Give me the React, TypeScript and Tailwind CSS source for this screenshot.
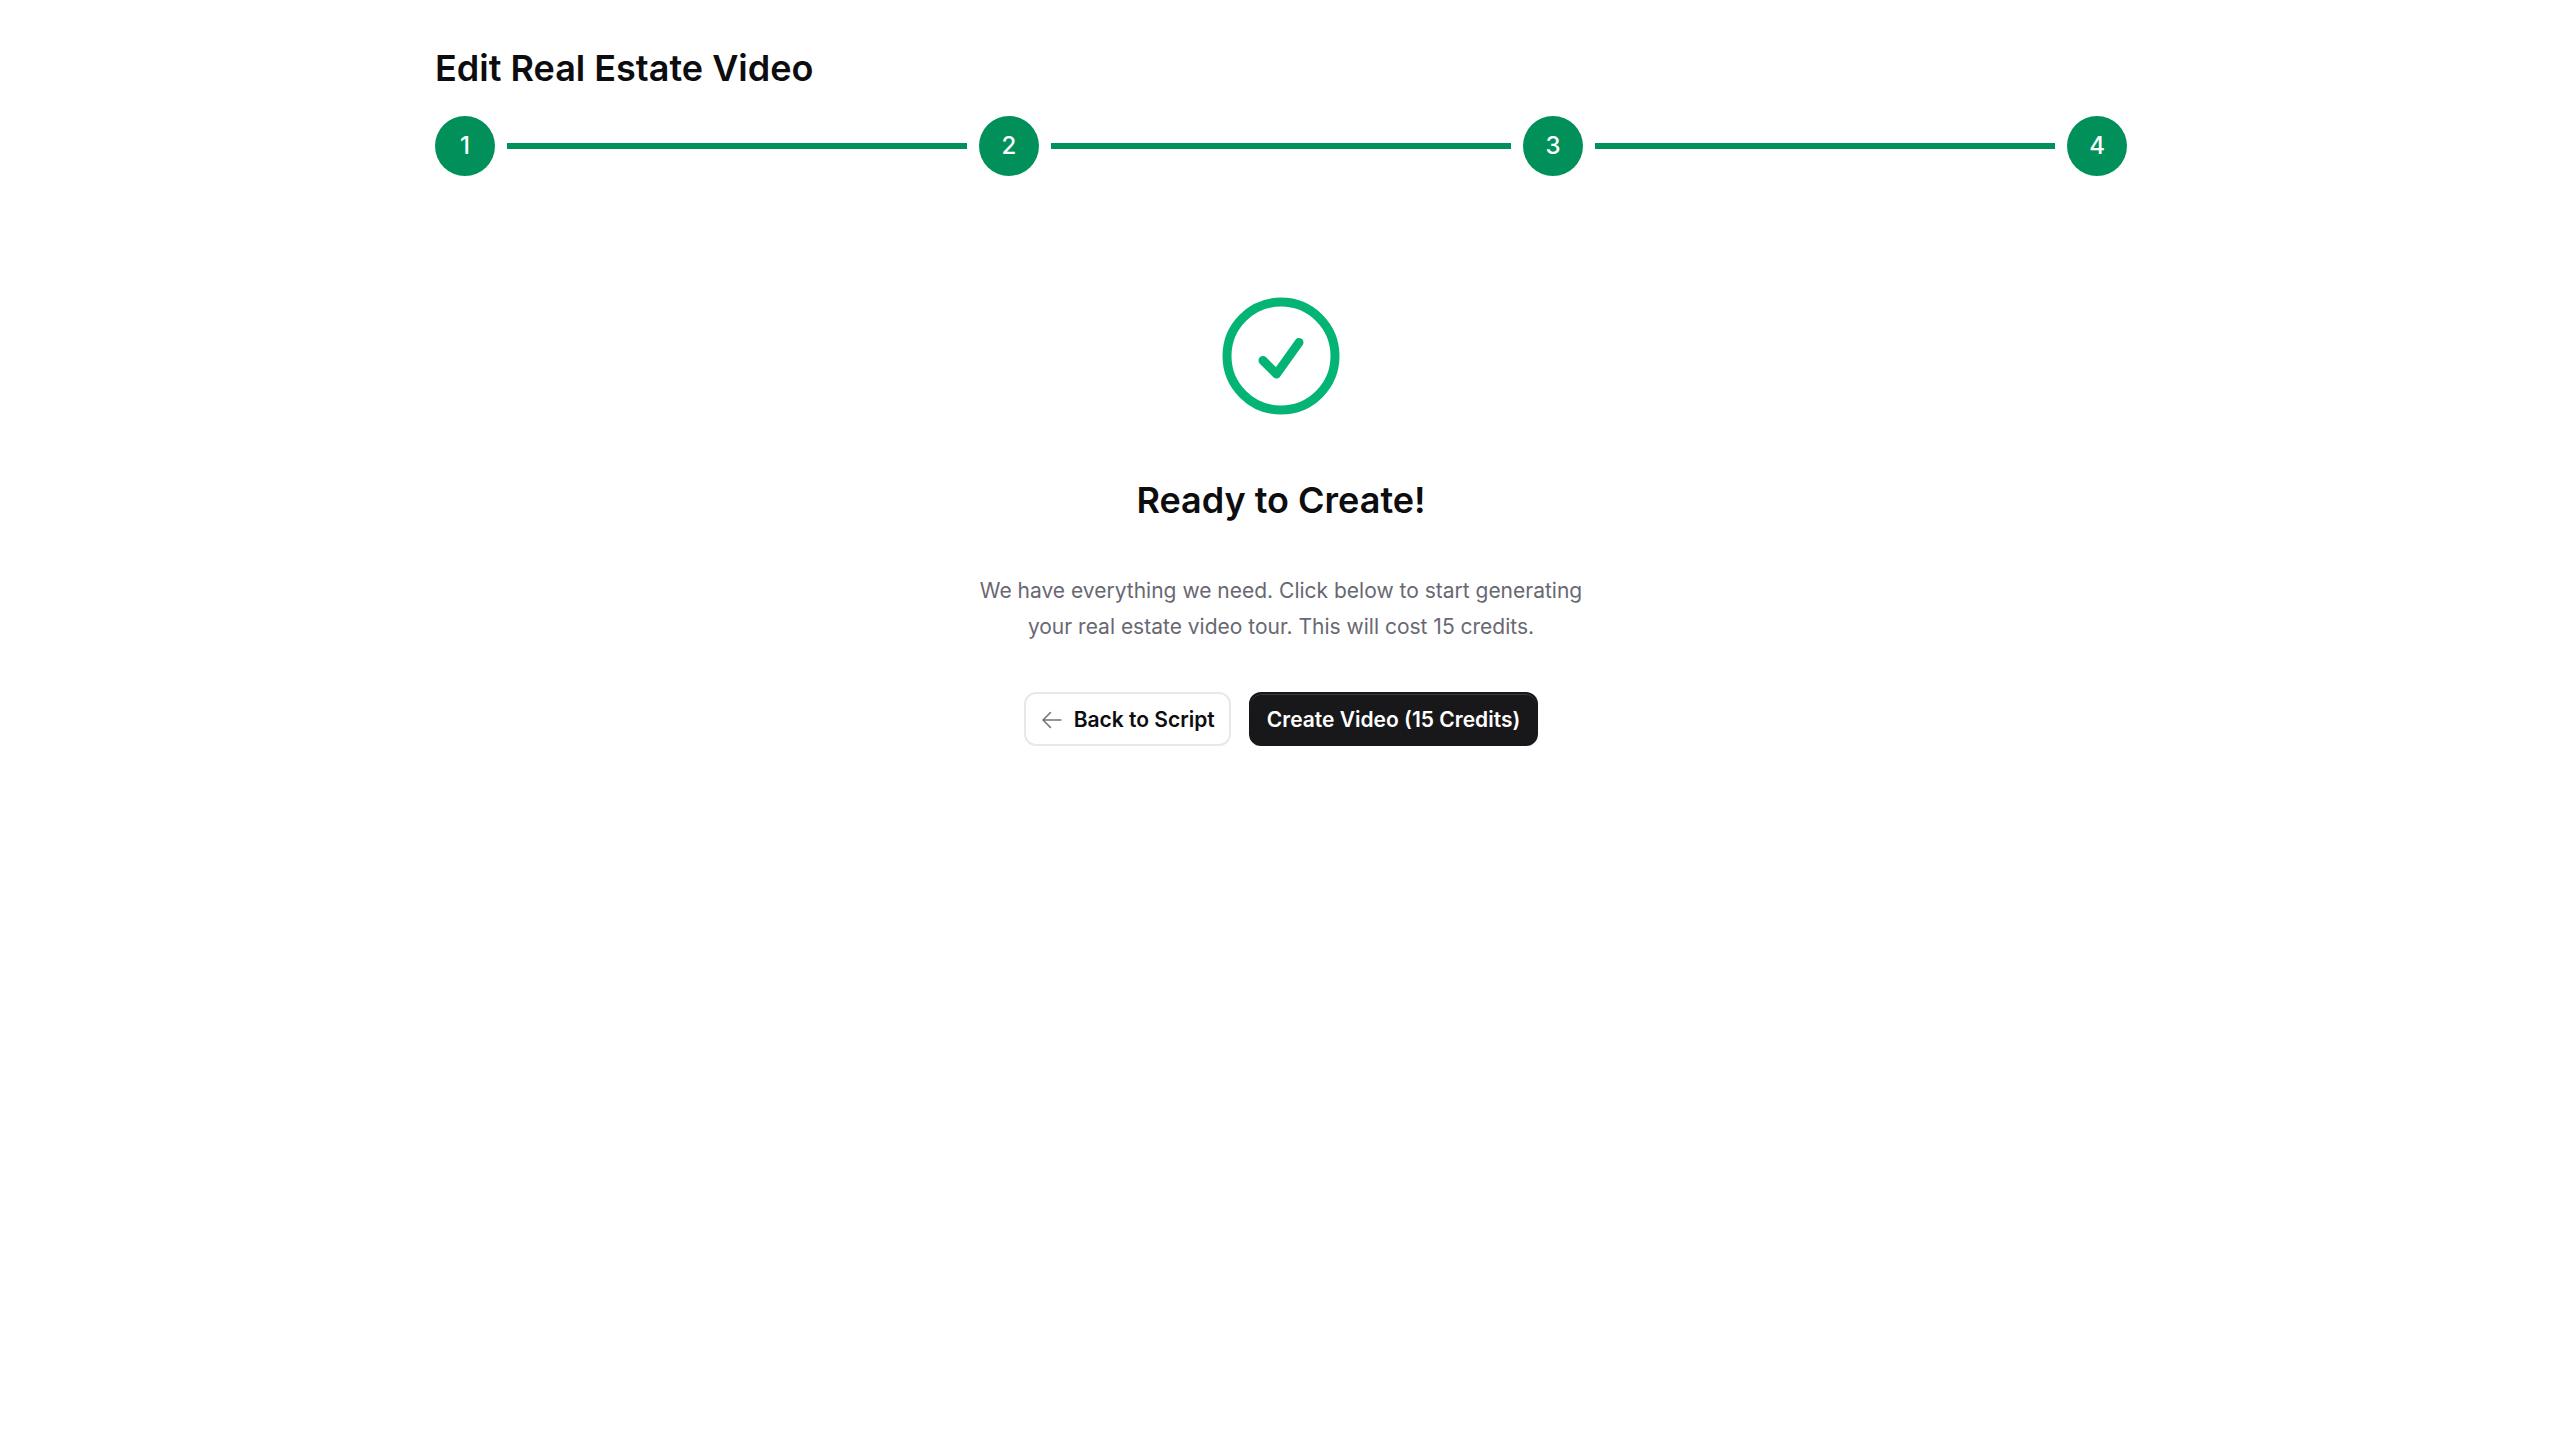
import { Fragment } from "react";

const STEPS = [1, 2, 3, 4];

function Stepper() {
  return (
    <div className="flex items-center gap-3">
      {STEPS.map((step, i) => (
        <Fragment key={step}>
          {i > 0 && <div className="h-1.5 flex-1 bg-[#02905a]"></div>}
          <div className="flex size-15 shrink-0 items-center justify-center rounded-full bg-[#02905a] text-2xl font-medium text-white">
            {step}
          </div>
        </Fragment>
      ))}
    </div>
  );
}

function CheckCircle() {
  return (
    <svg
      className="size-36 text-[#04b474]"
      viewBox="0 0 24 24"
      fill="none"
      stroke="currentColor"
      strokeWidth="1.5"
      strokeLinecap="round"
      strokeLinejoin="round"
      aria-hidden="true"
    >
      <path d="M9 12.75 11.25 15 15 9.75M21 12a9 9 0 1 1-18 0 9 9 0 0 1 18 0Z" />
    </svg>
  );
}

function ArrowLeft() {
  return (
    <svg
      className="size-6 text-zinc-500"
      viewBox="0 0 24 24"
      fill="none"
      stroke="currentColor"
      strokeWidth="1.5"
      strokeLinecap="round"
      strokeLinejoin="round"
      aria-hidden="true"
    >
      <path d="M10.5 19.5 3 12m0 0 7.5-7.5M3 12h18" />
    </svg>
  );
}

export default function App() {
  return (
    <main className="mx-auto max-w-[1742px] pt-11 pr-6 pl-[26px] font-[Inter,sans-serif] text-[#0d0d0f]">
      <h1 className="mb-6 text-4xl leading-12 font-semibold">Edit Real Estate Video</h1>
      <Stepper />
      <div className="mt-27 flex flex-col items-center text-center">
        <CheckCircle />
        <h2 className="mt-12 text-4xl leading-12 font-semibold">Ready to Create!</h2>
        <p className="mt-[49px] max-w-2xl px-6 text-[21px] leading-9 text-[#686872]">
          We have everything we need. Click below to start generating your real estate video tour. This will cost 15
          credits.
        </p>
        <div className="mt-[47px] flex gap-[18px]">
          <button
            type="button"
            className="flex items-center gap-2.5 rounded-xl border-2 border-[#e8e8ea] px-3.5 pt-2 pb-1.5 text-[21px] leading-9 font-semibold"
          >
            <ArrowLeft />
            Back to Script
          </button>
          <button
            type="button"
            className="rounded-xl border-2 border-zinc-900 bg-zinc-900 px-4 pt-2 pb-1.5 text-[21px] leading-9 font-semibold text-white shadow-xs inset-shadow-[0_1px_rgb(255_255_255/0.15)]"
          >
            Create Video (15 Credits)
          </button>
        </div>
      </div>
    </main>
  );
}
